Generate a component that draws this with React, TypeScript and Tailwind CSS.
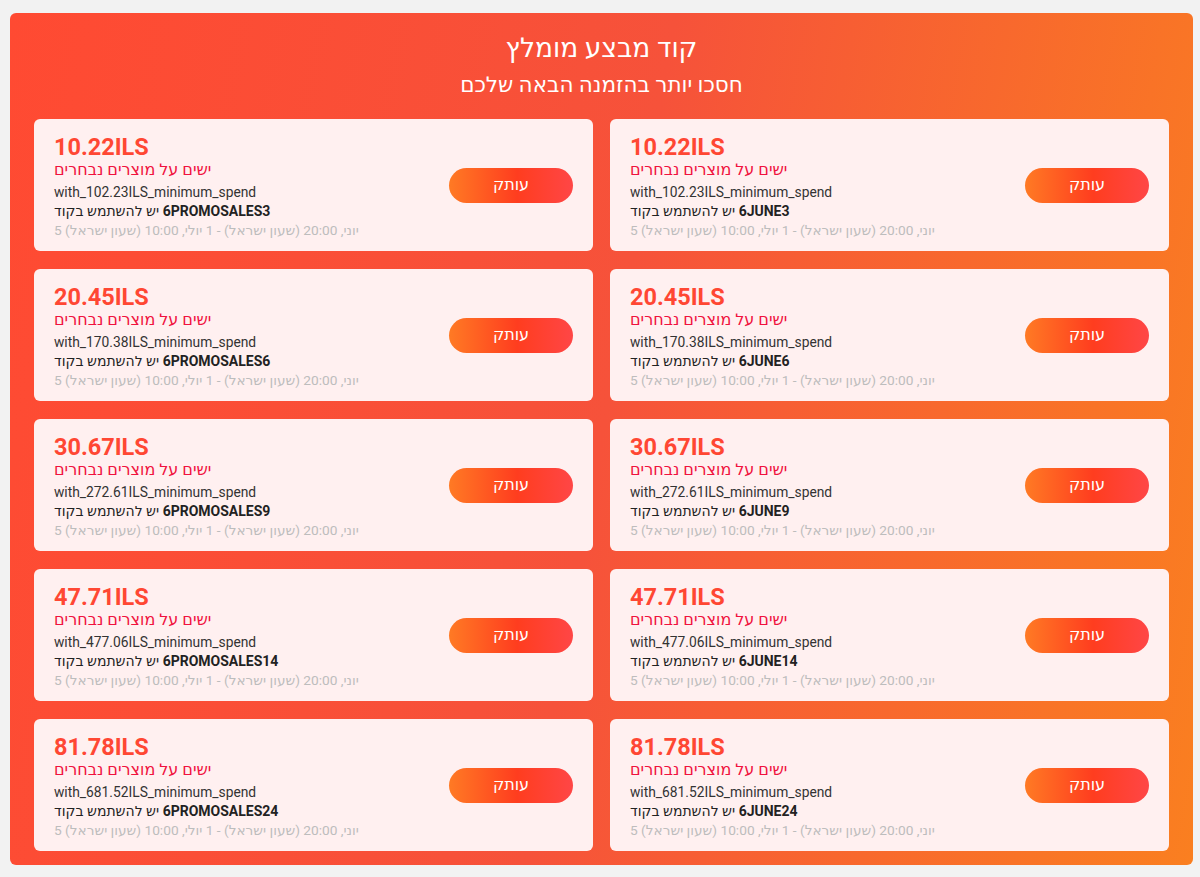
import React from "react";

const amounts = [
  { price: "10.22ILS", min: "with_102.23ILS_minimum_spend", n: "3" },
  { price: "20.45ILS", min: "with_170.38ILS_minimum_spend", n: "6" },
  { price: "30.67ILS", min: "with_272.61ILS_minimum_spend", n: "9" },
  { price: "47.71ILS", min: "with_477.06ILS_minimum_spend", n: "14" },
  { price: "81.78ILS", min: "with_681.52ILS_minimum_spend", n: "24" },
];

function Card({ price, min, code }: { price: string; min: string; code: string }) {
  return (
    <div className="flex h-[132px] items-center justify-between rounded-[6px] bg-[#fff0f0] pl-[20px] pr-[20px]">
      <div className="flex flex-col self-start pt-[15px]">
        <div className="text-[23.5px] font-bold leading-[26px] text-[#ff4733]">{price}</div>
        <div className="text-[16px] leading-[20px] text-[#f0123e]">ישים על מוצרים נבחרים</div>
        <div className="mt-[2px] text-[13.8px] leading-[20px] text-[#333333]">{min}</div>
        <div className="text-[14px] leading-[19px] text-[#222222]">
          יש להשתמש בקוד <bdi className="font-bold">{code}</bdi>
        </div>
        <div className="text-[13.7px] leading-[19px] text-[#bdbdbd]">
          5 יוני, 20:00 (שעון ישראל) - 1 יולי, 10:00 (שעון ישראל)
        </div>
      </div>
      <button className="flex h-[35px] w-[124px] items-center justify-center rounded-full bg-[linear-gradient(90deg,#ff7a24_0%,#ff3d1f_55%,#ff4646_100%)] text-[16px] text-white">
        עותק
      </button>
    </div>
  );
}

export default function App() {
  return (
    <div
      className="min-h-[877px] bg-[#f2f2f2] pt-[13px]"
      style={{ fontFamily: 'Roboto, "DejaVu Sans", "Noto Sans", sans-serif' }}
    >
      <div className="ml-[10px] w-[1183px] rounded-[6px] bg-[linear-gradient(100deg,#ff4a32_0%,#f6523a_50%,#fa7f20_100%)] px-[24px] pb-[14px] pt-[18px]">
        <div className="text-center text-[26.5px] leading-[34px] text-white">קוד מבצע מומלץ</div>
        <div className="mt-[5px] text-center text-[21.5px] leading-[30px] text-white">חסכו יותר בהזמנה הבאה שלכם</div>
        <div className="mt-[19px] grid grid-cols-2 gap-x-[17px] gap-y-[18px]">
          {amounts.map((a) => (
            <React.Fragment key={a.n}>
              <Card price={a.price} min={a.min} code={`6PROMOSALES${a.n}`} />
              <Card price={a.price} min={a.min} code={`6JUNE${a.n}`} />
            </React.Fragment>
          ))}
        </div>
      </div>
    </div>
  );
}
